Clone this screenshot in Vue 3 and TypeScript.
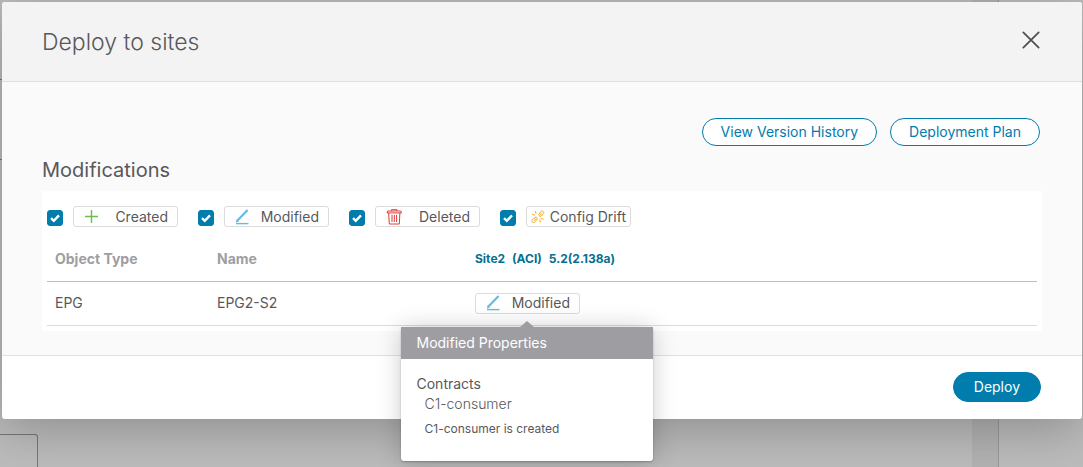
<script setup lang="ts">
import { reactive } from 'vue'

type Kind = 'created' | 'modified' | 'deleted' | 'drift'

const filters = reactive<{ kind: Kind; label: string; checked: boolean }[]>([
  { kind: 'created', label: 'Created', checked: true },
  { kind: 'modified', label: 'Modified', checked: true },
  { kind: 'deleted', label: 'Deleted', checked: true },
  { kind: 'drift', label: 'Config Drift', checked: true },
])

const rows = [{ type: 'EPG', name: 'EPG2-S2' }]
</script>

<template>
  <div class="page">
    <div class="backdrop" aria-hidden="true">
      <div class="backdrop-main">
        <div class="backdrop-row"></div>
        <div class="backdrop-row"></div>
        <div class="backdrop-card"></div>
      </div>
      <div class="backdrop-gutter"></div>
      <div class="backdrop-side"></div>
    </div>

    <section class="dialog" role="dialog" aria-labelledby="dialog-title">
      <header class="dialog-header">
        <h1 id="dialog-title">Deploy to sites</h1>
        <button class="close" type="button" aria-label="Close">
          <svg width="18" height="18" viewBox="0 0 18 18" fill="none" stroke="#4c4d4f" stroke-width="1.7" stroke-linecap="round">
            <path d="M1.3 1.3 16.7 16.7M16.7 1.3 1.3 16.7" />
          </svg>
        </button>
      </header>

      <div class="dialog-body">
        <div class="actions">
          <button class="pill" type="button">View Version History</button>
          <button class="pill" type="button">Deployment Plan</button>
        </div>
        <h2>Modifications</h2>

        <div class="card">
          <div class="filters">
            <div v-for="f in filters" :key="f.kind" class="filter">
              <input :id="`filter-${f.kind}`" v-model="f.checked" type="checkbox" />
              <label :for="`filter-${f.kind}`" class="tag" :class="`tag-${f.kind}`">
                <svg v-if="f.kind === 'created'" width="16" height="16" viewBox="0 0 16 16" fill="none" stroke="#6cc04a" stroke-width="1.4">
                  <path d="M7.5 1v13M1 7.5h13" />
                </svg>
                <svg v-else-if="f.kind === 'modified'" width="16" height="16" viewBox="0 0 16 16" fill="none" stroke="#64bbe3">
                  <path d="M2.4 11.4 12.6 1" stroke-width="2.2" />
                  <path d="M.7 13.4 1.6 10.2 4 12.6Z" fill="#64bbe3" stroke="none" />
                  <path d="M1 14.6h12.5" stroke-width="1.4" />
                </svg>
                <svg v-else-if="f.kind === 'deleted'" width="16" height="16" viewBox="0 0 16 16" fill="none" stroke="#dc3c38" stroke-width="1">
                  <path d="M1 3.9h14.5L14.8 2H1.7ZM5.5 2V.7h5.5V2M2.7 4l.6 11h10l.6-11M6 5.8v7.2M8.3 5.8v7.2M10.6 5.8v7.2" />
                </svg>
                <svg v-else width="14" height="14" viewBox="0 0 14 14" fill="none" stroke="#f3ac2c" stroke-width="1" stroke-linecap="round">
                  <path d="M8.4 5.6 7.6 4.8 9.4 1.9C10.3.8 11.6.8 12.3 1.5s.6 1.9-.3 2.8L9.2 6.5Z" />
                  <path d="M5.6 8 6.4 8.8 4.3 11.7C3.3 12.7 2 12.6 1.4 12s-.6-1.9.3-2.8L4.8 7.1Z" />
                  <path d="M9 4.7 10.6 3.2M5 8.9 3.4 10.3M4.4 1.4 5 3.6M1.4 4.5 3.6 5M8.8 9.9l.6 2.3M10 8.6l2.3.5" />
                </svg>
                <span>{{ f.label }}</span>
              </label>
            </div>
          </div>

          <table>
            <colgroup>
              <col class="col-type" />
              <col class="col-name" />
              <col />
            </colgroup>
            <thead>
              <tr>
                <th scope="col">Object Type</th>
                <th scope="col">Name</th>
                <th scope="col" class="site">
                  <div class="site-parts"><span>Site2</span><span>(ACI)</span><span>5.2(2.138a)</span></div>
                </th>
              </tr>
            </thead>
            <tbody>
              <tr v-for="r in rows" :key="r.name">
                <td>{{ r.type }}</td>
                <td>{{ r.name }}</td>
                <td>
                  <div class="anchor">
                    <button class="tag" type="button" aria-describedby="modified-tip">
                      <svg width="16" height="16" viewBox="0 0 16 16" fill="none" stroke="#64bbe3">
                        <path d="M2.4 11.4 12.6 1" stroke-width="2.2" />
                        <path d="M.7 13.4 1.6 10.2 4 12.6Z" fill="#64bbe3" stroke="none" />
                        <path d="M1 14.6h12.5" stroke-width="1.4" />
                      </svg>
                      <span>Modified</span>
                    </button>
                    <div id="modified-tip" class="tip" role="tooltip">
                      <div class="tip-title">Modified Properties</div>
                      <div class="tip-body">
                        <p class="tip-group">Contracts</p>
                        <p class="tip-item">C1-consumer</p>
                        <p class="tip-note">C1-consumer is created</p>
                      </div>
                    </div>
                  </div>
                </td>
              </tr>
            </tbody>
          </table>
        </div>
      </div>

      <footer class="dialog-footer">
        <button class="pill primary" type="button">Deploy</button>
      </footer>
    </section>
  </div>
</template>

<style>
body {
  margin: 0;
  background: #bcbcbc;
}
</style>

<style scoped>
* {
  box-sizing: border-box;
}

.page {
  position: relative;
  min-height: 100vh;
  padding: 2px 1px 0 2px;
  overflow: hidden;
  font-family: Inter, 'Liberation Sans', sans-serif;
  font-size: 14px;
  line-height: 20px;
  color: #58585b;
}

.backdrop {
  position: absolute;
  inset: 0;
  display: flex;
}

.backdrop-main {
  flex: 1;
  display: flex;
  flex-direction: column;
}

.backdrop-row {
  height: 80px;
  border-bottom: 1px solid #777;
}

.backdrop-card {
  width: 38px;
  height: 33px;
  margin-top: auto;
  border: 1px solid #777;
  border-width: 1px 1px 0 0;
  border-top-right-radius: 3px;
}

.backdrop-gutter {
  width: 27px;
  background: #b2b2b2;
  border-right: 1px solid #989898;
}

.backdrop-side {
  width: 84px;
}

.dialog {
  position: relative;
  background: #fff;
  border-radius: 3px;
  box-shadow: 0 10px 50px rgba(0, 0, 0, 0.25);
}

.dialog-header {
  display: flex;
  align-items: center;
  justify-content: space-between;
  height: 80px;
  padding: 0 40px;
  background: #f3f3f3;
  border-bottom: 1px solid #e0e0e0;
  border-radius: 3px 3px 0 0;
}

h1 {
  margin: 0;
  font-size: 23px;
  line-height: 32px;
  font-weight: 300;
}

.close {
  display: flex;
  padding: 2px;
  margin-bottom: 4px;
  border: 0;
  background: none;
}

.dialog-body {
  padding: 36px 40px 24px;
  background: #fafafa;
}

.actions {
  display: flex;
  justify-content: flex-end;
  gap: 13px;
  padding-right: 2px;
}

.pill {
  height: 28px;
  padding: 0 18px;
  border: 1px solid #007cad;
  border-radius: 15px;
  background: #fff;
  font: inherit;
  color: #007cad;
}

h2 {
  margin: 12px 0 9px;
  font-size: 20px;
  line-height: 24px;
  font-weight: 400;
}

.card {
  padding: 15px 5px 5px;
  background: #fff;
}

.filters {
  display: flex;
  gap: 20px;
}

.filter {
  display: flex;
  gap: 10px;
}

input[type='checkbox'] {
  appearance: none;
  width: 16px;
  height: 16px;
  margin: 4px 0 0;
  border: 1px solid #007cad;
  border-radius: 3px;
  background: #fff;
}

input[type='checkbox']:checked {
  background: #007cad
    url("data:image/svg+xml,%3Csvg xmlns='http://www.w3.org/2000/svg' viewBox='0 0 14 14'%3E%3Cpath d='M3 7.2 5.8 9.9 11 4.4' fill='none' stroke='white' stroke-width='2.4'/%3E%3C/svg%3E");
}

.tag {
  display: flex;
  align-items: center;
  justify-content: space-between;
  width: 105px;
  height: 21px;
  padding: 0 9px 0 10px;
  border: 1px solid #dcdcdc;
  border-radius: 3px;
  background: #fff;
  font: inherit;
  line-height: 18px;
  color: #58585b;
  white-space: nowrap;
}

.tag-drift {
  padding: 0 4px;
}

table {
  width: 100%;
  margin-top: 10px;
  border-collapse: collapse;
  table-layout: fixed;
}

.col-type {
  width: 162px;
}

.col-name {
  width: 258px;
}

th,
td {
  height: 44px;
  padding: 0 8px;
  text-align: left;
  border-bottom: 1px solid #dcdcdc;
}

th {
  color: #9e9ea2;
  font-weight: 700;
  border-bottom-color: #bdbdbd;
}

.site {
  font-size: 12px;
  color: #05708f;
}

.site-parts {
  display: flex;
  gap: 7px;
}

.anchor {
  position: relative;
  width: 105px;
}

.tip {
  position: absolute;
  top: 34px;
  left: 50%;
  width: 252px;
  height: 134px;
  margin-left: -127px;
  background: #fff;
  border-radius: 3px;
  box-shadow: 0 1px 24px rgba(0, 0, 0, 0.2), 0 1px 2px rgba(0, 0, 0, 0.25);
}

.tip::before {
  content: '';
  position: absolute;
  top: -6px;
  left: 50%;
  margin-left: -7px;
  border: 7px solid transparent;
  border-top: 0;
  border-bottom: 6px solid #9e9ea2;
}

.tip-title {
  padding: 6px 16px;
  background: #9e9ea2;
  color: #fff;
}

.tip-body {
  padding: 15px 16px 0;
}

.tip p {
  margin: 0;
}

.tip-item {
  padding-left: 8px;
  font-weight: 300;
}

.tip .tip-note {
  margin-top: 5px;
  padding-left: 8px;
  font-size: 12px;
}

.dialog-footer {
  display: flex;
  justify-content: flex-end;
  padding: 16px 41px 17px;
  border-top: 1px solid #e0e0e0;
}

.primary {
  height: 30px;
  padding: 0 20px;
  background: #007cad;
  color: #fff;
}
</style>
